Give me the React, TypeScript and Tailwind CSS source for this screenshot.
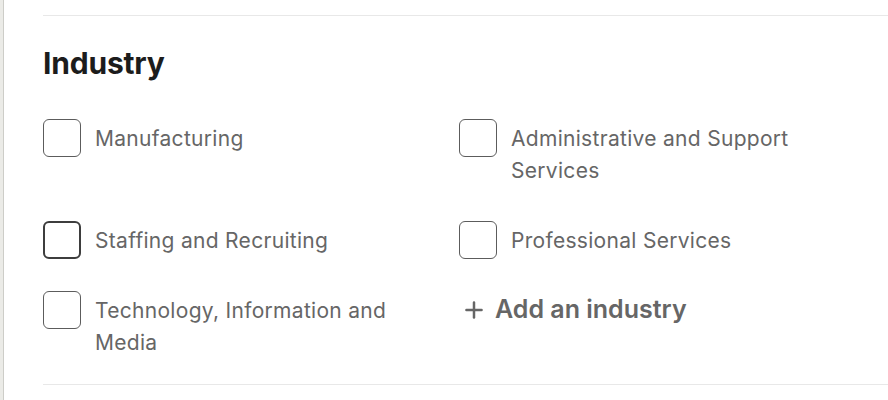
import { Plus } from 'lucide-react';

const items: { label: string; hover?: boolean }[] = [
  { label: 'Manufacturing' },
  { label: 'Administrative and Support Services' },
  { label: 'Staffing and Recruiting', hover: true },
  { label: 'Professional Services' },
  { label: 'Technology, Information and Media' },
];

function CheckItem({ label, hover }: { label: string; hover?: boolean }) {
  return (
    <label className="flex items-start gap-[14px]">
      <span
        className={
          hover
            ? 'h-[38px] w-[38px] shrink-0 rounded-[6px] border-2 border-[#3d3d3d] bg-white'
            : 'h-[38px] w-[38px] shrink-0 rounded-[6px] border border-[#5c5c5c] bg-white'
        }
      />
      <span className="max-w-[310px] pt-[4px] pb-[2px] text-[21px] leading-[32px] tracking-[0.3px] text-[#666666]">
        {label}
      </span>
    </label>
  );
}

export default function App() {
  return (
    <div className="flex h-[400px] w-[888px] bg-white font-['Inter',sans-serif]">
      <div className="w-[4px] shrink-0 border-r border-[#cdcdc8] bg-[#ebebe7]" />
      <div className="flex-1 pl-[39px]">
        <div className="mt-[15px] border-t border-[#e8e8e8]" />
        <h2 className="mt-[27px] text-[30px] font-bold leading-[40px] tracking-[-0.2px] text-[#1c1c1c]">
          Industry
        </h2>
        <div className="mt-[36px] grid grid-cols-[416px_1fr] gap-y-[32px]">
          {items.map((it) => (
            <CheckItem key={it.label} label={it.label} hover={it.hover} />
          ))}
          <button className="flex h-[38px] items-center gap-[8px] pl-[2px] text-[25px] font-semibold text-[#666666]">
            <Plus size={26} strokeWidth={2.3} />
            Add an industry
          </button>
        </div>
        <div className="mt-[23px] border-t border-[#e8e8e8]" />
      </div>
    </div>
  );
}
